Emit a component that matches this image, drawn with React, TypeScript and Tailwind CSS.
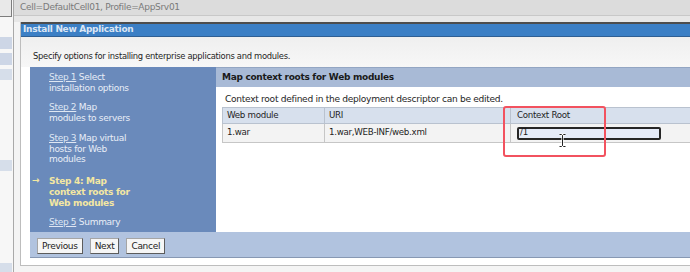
import React from 'react';

const STEPS = [
  { num: 'Step 1', rest: ' Select', more: ['installation options'] },
  { num: 'Step 2', rest: ' Map', more: ['modules to servers'] },
  { num: 'Step 3', rest: ' Map virtual', more: ['hosts for Web', 'modules'] },
];

function Sidebar() {
  return (
    <div className="w-[14px] shrink-0 h-full bg-[#f7f7f7] border-r border-[#a9a9a9] flex flex-col">
      <div className="h-[17px] w-[12px] bg-[#e9e9e9] border-r border-b border-[#7d7d7d]" />
      <div className="h-[20px]" />
      <div className="h-[12px] w-[12px] bg-[#cdd6e6]" />
      <div className="h-[4px]" />
      <div className="h-[12px] w-[12px] bg-[#cdd6e6]" />
      <div className="h-[4px]" />
      <div className="h-[11px] w-[12px] bg-[#d6deea]" />
      <div className="h-[80px]" />
      <div className="h-[11px] w-[12px] bg-[#d6deea]" />
      <div className="h-[92px]" />
      <div className="h-[9px] w-[12px] bg-[#d6deea]" />
    </div>
  );
}

function IBeam() {
  return (
    <svg className="absolute left-[558px] top-[133px]" width="9" height="15" viewBox="0 0 9 15">
      <path d="M1.5 1.5h2l1 1 1-1h2M4.5 2.5v10M1.5 13.5h2l1-1 1 1h2" fill="none" stroke="#fff" strokeWidth="2.2" />
      <path d="M1.5 1.5h2l1 1 1-1h2M4.5 2.5v10M1.5 13.5h2l1-1 1 1h2" fill="none" stroke="#222" strokeWidth="1" />
    </svg>
  );
}

export default function App() {
  return (
    <div className="relative w-[690px] h-[272px] overflow-hidden flex bg-[#f4f4f4] font-['DejaVu_Sans',sans-serif] text-[8.5px] tracking-[-0.3px] text-[#1e1e1e]">
      <Sidebar />
      <div className="flex-1 flex flex-col min-w-0">
        <div className="h-[16px] shrink-0 pl-[6px] flex items-center bg-[#dcdcdc] border-b border-[#c8c8c8] text-[#7a7a7a] text-[9px]">
          Cell=DefaultCell01, Profile=AppSrv01
        </div>
        <div className="h-[6px] shrink-0 bg-[#e7e7e7]" />
        <div className="ml-[6px] h-[244px] shrink-0 flex flex-col border-l border-b border-[#bdbdbd] bg-white">
          <div className="h-[15px] shrink-0 pl-[2px] flex items-center bg-[#3b7fc5] border-t-2 border-[#4d4d4d] border-b border-b-[#2f5f93] text-[#dbe6f4] font-bold text-[9px]">
            Install New Application
          </div>
          <div className="pl-[12px] pt-[13px] h-[30px] shrink-0 bg-gradient-to-b from-[#efefef] to-[#f7f7f7] text-[8.4px]">
            Specify options for installing enterprise applications and modules.
          </div>
          <div className="ml-[9px] flex flex-col">
            <div className="flex h-[165px]">
              <div className="w-[186px] shrink-0 bg-[#6a8abb] pl-[19px] pt-[5px] text-[#e9eef7] leading-[10.7px] text-[9px]">
                {STEPS.map((s) => (
                  <div key={s.num} className="mb-[9px]">
                    <span className="underline text-[#dfe7f3]">{s.num}</span>
                    {s.rest}
                    {s.more.map((m) => (
                      <div key={m}>{m}</div>
                    ))}
                  </div>
                ))}
                <div className="relative mt-[11.5px] mb-[8.5px] font-bold text-[#f3e7a2]">
                  <span className="absolute -left-[17px] -top-[1px]">→</span>
                  <div>Step 4: Map</div>
                  <div>context roots for</div>
                  <div>Web modules</div>
                </div>
                <div>
                  <span className="underline text-[#dfe7f3]">Step 5</span> Summary
                </div>
              </div>
              <div className="flex-1 flex flex-col bg-white min-w-0">
                <div className="h-[20px] shrink-0 pl-[6px] flex items-center bg-[#a8bad6] border-t border-[#93a6c3] font-bold text-[9px] text-[#1a1a1a]">
                  Map context roots for Web modules
                </div>
                <div className="pl-[9px] pt-[6px] h-[20px] shrink-0 text-[9.1px]">
                  Context root defined in the deployment descriptor can be edited.
                </div>
                <div className="ml-[6px] w-[480px] text-[8.7px]">
                  <div className="flex h-[17px] bg-[#d7e0ed] border-y border-l border-[#b9c2cf]">
                    <div className="w-[102px] pl-[4px] flex items-center border-r border-[#b9c2cf]">Web module</div>
                    <div className="w-[186px] pl-[4px] flex items-center border-r border-[#b9c2cf]">URI</div>
                    <div className="flex-1 pl-[6px] flex items-center">Context Root</div>
                  </div>
                  <div className="flex h-[19px] bg-[#f3f3f3] border-b border-l border-[#c6c6c6]">
                    <div className="w-[102px] pl-[4px] flex items-center border-r border-[#c6c6c6]">1.war</div>
                    <div className="w-[186px] pl-[4px] flex items-center border-r border-[#c6c6c6]">1.war,WEB-INF/web.xml</div>
                    <div className="flex-1 pl-[6px] flex items-center">
                      <div className="w-[144px] h-[13px] rounded-[2px] border-2 border-[#262626] bg-[#e5ebf8] pl-[1px] flex items-center text-[#1a1a1a]">
                        /1
                      </div>
                    </div>
                  </div>
                </div>
              </div>
            </div>
            <div className="h-[26px] shrink-0 bg-[#b1c3df] border-b border-[#8798b3] pl-[7px] pt-[6px] flex gap-[7px] items-start">
              {['Previous', 'Next', 'Cancel'].map((b) => (
                <button
                  key={b}
                  className="h-[16px] px-[4px] bg-[#f6f6f6] border border-[#a5a5a5] border-r-[#5c5c5c] border-b-[#5c5c5c] text-[9px] text-[#222] leading-none"
                >
                  {b}
                </button>
              ))}
            </div>
          </div>
        </div>
      </div>
      <div className="absolute left-[503px] top-[106px] w-[103px] h-[51px] border-2 border-[#f2525f] rounded-[3px]" />
      <IBeam />
    </div>
  );
}
